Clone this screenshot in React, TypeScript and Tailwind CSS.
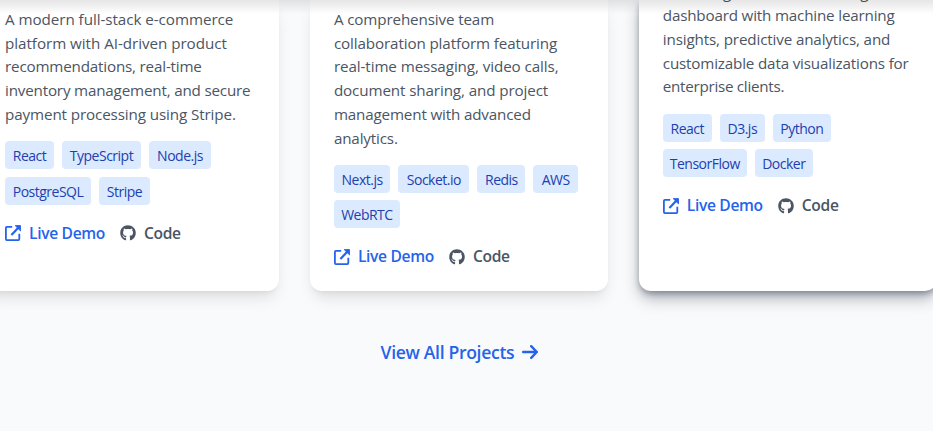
import { FaGithub } from "react-icons/fa";

type Pair = [string, string];
type Project = { lines: Pair[]; tags: Pair[]; offset: string; shadow: string };

const softShadow = "shadow-[0_10px_15px_-3px_rgba(0,0,0,0.1),0_4px_6px_-4px_rgba(0,0,0,0.1)]";

const projects: Project[] = [
  {
    lines: [
      ["A modern full-stack e-commerce", "tracking-[-0.05px]"],
      ["platform with AI-driven product", "tracking-[-0.04px]"],
      ["recommendations, real-time", "tracking-[-0.18px]"],
      ["inventory management, and secure", "tracking-[-0.18px]"],
      ["payment processing using Stripe.", "tracking-[-0.11px]"],
    ],
    tags: [["React", "w-[49px]"], ["TypeScript", "w-[79px]"], ["Node.js", "w-[62px]"], ["PostgreSQL", "w-[86px]"], ["Stripe", "w-[51px]"]],
    offset: "pt-[8px]",
    shadow: softShadow,
  },
  {
    lines: [
      ["A comprehensive team", "tracking-[-0.13px]"],
      ["collaboration platform featuring", "tracking-[-0.12px]"],
      ["real-time messaging, video calls,", "tracking-[-0.09px]"],
      ["document sharing, and project", "tracking-[-0.11px]"],
      ["management with advanced", "tracking-[-0.16px]"],
      ["analytics.", "tracking-[-0.15px]"],
    ],
    tags: [["Next.js", "w-[56.5px]"], ["Socket.io", "w-[71px]"], ["Redis", "w-[48px]"], ["AWS", "w-[44.5px]"], ["WebRTC", "w-[66px]"]],
    offset: "pt-[8px]",
    shadow: softShadow,
  },
  {
    lines: [
      ["An intelligent business intelligence", "tracking-[-0.13px]"],
      ["dashboard with machine learning", "tracking-[-0.18px]"],
      ["insights, predictive analytics, and", "tracking-[-0.14px]"],
      ["customizable data visualizations for", "tracking-[-0.17px]"],
      ["enterprise clients.", "tracking-[-0.27px]"],
    ],
    tags: [["React", "w-[49px]"], ["D3.js", "w-[45px]"], ["Python", "w-[58px]"], ["TensorFlow", "w-[84px]"], ["Docker", "w-[58px]"]],
    offset: "-mt-[19.5px]",
    shadow: "shadow-[0_8px_16px_-1px_rgba(30,41,59,0.36),0_3px_6px_-1px_rgba(30,41,59,0.4)]",
  },
];

function Card({ p }: { p: Project }) {
  return (
    <article className={`h-[291px] w-[298px] shrink-0 rounded-b-xl bg-white px-6 ${p.shadow}`}>
      <div className={p.offset}>
        <div className="text-[15.2px] leading-[23.7px] text-[#4b5563]">
          {p.lines.map(([line, tracking]) => (
            <p key={line} className={`whitespace-nowrap ${tracking}`}>{line}</p>
          ))}
        </div>
        <div className="mt-[14.6px] flex flex-wrap gap-x-2 gap-y-[7.6px]">
          {p.tags.map(([tag, width]) => (
            <span key={tag} className={`flex h-7 items-center justify-center rounded bg-[#dbeafe] pt-px text-[14px] tracking-[-0.5px] whitespace-nowrap text-[#1e40af] ${width}`}>{tag}</span>
          ))}
        </div>
        <div className="mt-[16.5px] flex h-6 items-center text-[15.6px] font-semibold tracking-[-0.33px]">
          <a className="flex w-[115px] items-center gap-2 whitespace-nowrap text-[#2563eb]">
            <svg className="size-4 shrink-0" viewBox="0 0 16 16" fill="none" stroke="currentColor" strokeWidth="1.8" strokeLinejoin="round">
              <path d="M7.2 1.9H1.9Q0.9 1.9 0.9 2.9V14.1Q0.9 15.1 1.9 15.1H13.3Q14.3 15.1 14.3 14.1V8.8" />
              <path d="M6.4 9.9L13.5 2.6" strokeWidth="2.2" />
              <path d="M10.2 0.6H15.5V5.9Z" fill="currentColor" strokeWidth="0.9" />
            </svg>
            Live Demo
          </a>
          <a className="flex items-center gap-2 text-[#4b5563]"><FaGithub className="size-4 shrink-0" />Code</a>
        </div>
      </div>
    </article>
  );
}

export default function App() {
  return (
    <main className="relative h-[431px] w-[933px] overflow-hidden bg-[#f9fafb] font-['Open_Sans',sans-serif]">
      <div className="-ml-[19px] flex w-max gap-[30.9px]">
        {projects.map((p) => <Card key={p.lines[0][0]} p={p} />)}
      </div>
      <a className="mt-[47.5px] ml-[380.5px] flex h-7 items-center gap-2 text-[17.6px] font-semibold tracking-[-0.33px] text-[#2563eb]">
        View All Projects
        <svg className="-mt-[2px] size-4" viewBox="0 0 16 16" fill="none" stroke="currentColor" strokeWidth="2.4" strokeLinecap="round" strokeLinejoin="round"><path d="M1.2 8H14.8M9.2 2.2L14.8 8L9.2 13.8" /></svg>
      </a>
      <div className="absolute inset-x-0 top-0 h-3.5 bg-gradient-to-b from-black/10 to-transparent" />
    </main>
  );
}
